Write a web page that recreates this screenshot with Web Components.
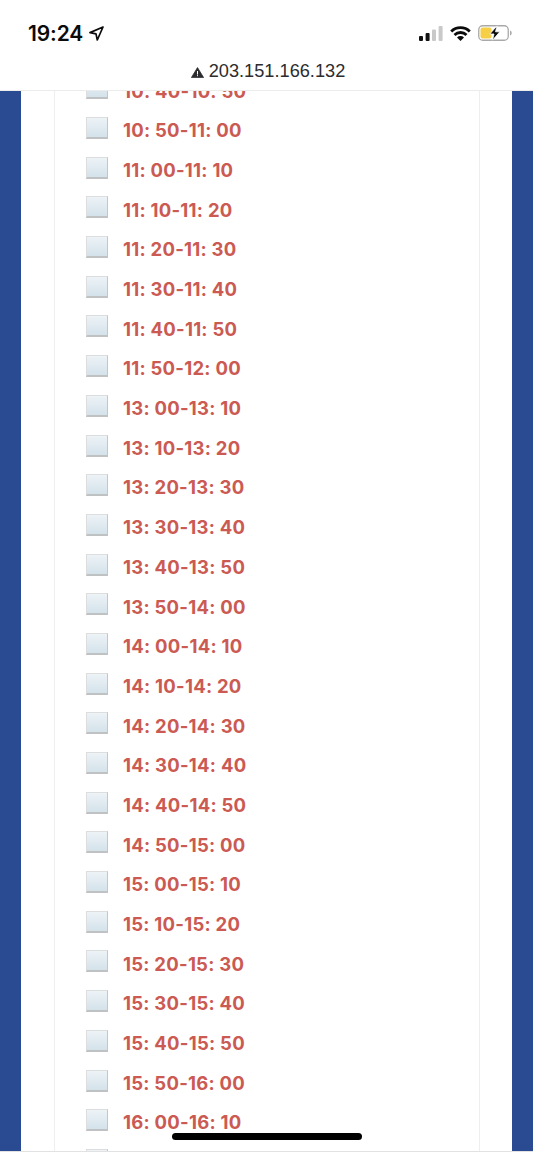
<!DOCTYPE html>
<html><head><meta charset="utf-8">
<style>
html,body{margin:0;padding:0;height:100%;background:#fff;overflow:hidden}
</style></head><body>
<phone-screen>
  <status-bar slot="top"></status-bar>
  <address-bar slot="top">203.151.166.132</address-bar>
  <slot-list id="list"></slot-list>
  <home-indicator slot="over"></home-indicator>
</phone-screen>
<script>
function def(name, css, html, init){
  customElements.define(name, class extends HTMLElement{
    constructor(){super();const r=this.attachShadow({mode:'open'});r.innerHTML='<style>'+css+'</style>'+html;}
    connectedCallback(){ if(init) init.call(this,this.shadowRoot); }
  });
}
def('phone-screen',`
:host{display:flex;flex-direction:column;position:relative;width:533px;height:1152px;box-sizing:border-box;border-bottom:1px solid #e2e2e2;overflow:hidden;background:#fff}
.page{flex:1;min-height:0;overflow:hidden;background:#2a4a92;padding:0 21px;display:flex}
.sheet{flex:1;background:#fff;padding:0 32px 0 33px;display:flex}
.card{flex:1;border:solid #eeeeef;border-width:0 1px;overflow:hidden}
`,`<slot name="top"></slot><div class="page"><div class="sheet"><div class="card"><slot></slot></div></div></div><slot name="over"></slot>`);

def('status-bar',`
:host{display:flex;align-items:center;justify-content:space-between;height:52px;box-sizing:border-box;padding:14px 21px 0 28px;background:#fff;color:#0b0b0b}
.l,.r{display:flex;align-items:center}
.t{font:600 21px/1 Inter,"Liberation Sans",sans-serif;letter-spacing:-.1px}
.l svg{margin-left:6px}
.r svg{display:block}
.wifi{margin:0 7px 0 7px}
`,`<div class="l"><span class="t">19:24</span>
<svg width="15" height="15" viewBox="0 0 15 15"><path d="M14 1 1 6.600 7 7.800 8.300 14Z" fill="none" stroke="#0b0b0b" stroke-width="1.700" stroke-linejoin="round"/></svg></div>
<div class="r">
<svg width="24" height="15" viewBox="0 0 24 15"><rect x="0" y="10" width="4" height="5" rx="1" fill="#111"/><rect x="6.6" y="7" width="4" height="8" rx="1" fill="#111"/><rect x="13" y="3.500" width="4" height="11.500" rx="1" fill="#c9c9c9"/><rect x="19.600" y="0" width="4" height="15" rx="1" fill="#c9c9c9"/></svg>
<svg class="wifi" width="21" height="15" viewBox="0 0 21 15"><path d="M1.2 5.500A13.300 13.300 0 0 1 19.800 5.500M4.500 8.900A8.700 8.700 0 0 1 16.500 8.900" fill="none" stroke="#0b0b0b" stroke-width="2.800"/><path d="M7 11.500A5 5 0 0 1 14 11.500L10.500 15Z" fill="#0b0b0b"/></svg>
<svg width="34" height="16" viewBox="0 0 34 16"><rect x=".75" y=".75" width="29.500" height="14.500" rx="4" fill="none" stroke="#a9a9a9" stroke-width="1.300"/><rect x="2.500" y="2.500" width="11" height="11" rx="2" fill="#f6cf46"/><path d="M19 .8 11.800 9H16L14.500 15.200 21.800 6.800H17.500Z" fill="#0b0b0b" stroke="#fff" stroke-width=".8"/><path d="M32 5.500C33.300 6 33.700 7 33.700 8S33.300 10 32 10.500Z" fill="#a9a9a9"/></svg>
</div>`);

def('address-bar',`
:host{display:flex;align-items:center;justify-content:center;gap:5px;height:39px;box-sizing:border-box;padding:1px 0 0 3px;background:#fff;border-bottom:1px solid #ececec;color:#2c2c2e;font:400 18.200px/1 "Liberation Sans",Arial,sans-serif}
svg{display:block;margin-top:2px}
`,`<svg width="13" height="11" viewBox="0 0 13 11"><path d="M6.500 .6 12.600 10.600H.4Z" fill="#2c2c2e" stroke="#2c2c2e" stroke-width=".8" stroke-linejoin="round"/><rect x="6" y="4" width="1" height="3.500" fill="#fff"/><rect x="6" y="8.200" width="1" height="1" fill="#fff"/></svg><slot></slot>`);

def('time-row',`
:host{display:flex;align-items:center;height:39.700px;padding-left:31px;gap:15px;color:#cb5a53;font:700 18.500px/1 Inter,"Liberation Sans",sans-serif;letter-spacing:.25px;white-space:nowrap}
.box{flex:none;width:22px;height:22px;margin-bottom:3px;box-sizing:border-box;border-style:solid;border-width:1px 1.500px 2px 1px;border-color:#dcdddd #c4c6c7 #bfc1c2 #dcdddd;background:linear-gradient(#edf3f7,#d4e2ea)}
.txt{padding-top:2px}
`,`<span class="box"></span><span class="txt"><slot></slot></span>`);

def('slot-list',`
:host{display:block;margin-top:-21px}
`,``,function(r){
  if(r.childElementCount>1) return;
  const p=n=>String(n).padStart(2,'0');
  const rows=[];
  const add=(h,m)=>{const e=m+10;const eh=e===60?h+1:h;const em=e===60?0:e;rows.push(`${h}: ${p(m)}-${eh}: ${p(em)}`)};
  add(10,40);add(10,50);
  for(const m of [0,10,20,30,40,50]) add(11,m);
  for(const h of [13,14,15]) for(const m of [0,10,20,30,40,50]) add(h,m);
  add(16,0);rows.push('');
  for(const t of rows){const e=document.createElement('time-row');e.textContent=t;r.appendChild(e);}
});

def('home-indicator',`
:host{position:absolute;left:172px;top:1133px;width:190px;height:7px;border-radius:4px;background:#000}
`,``);
</script>
</body></html>
